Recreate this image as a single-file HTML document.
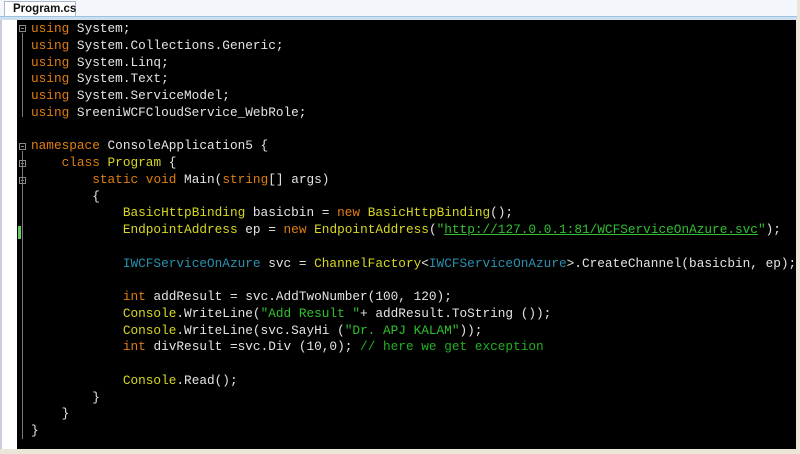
<!DOCTYPE html>
<html><head><style>
body{margin:0;width:800px;height:454px;background:#ece6d8;overflow:hidden;position:relative;font-family:"Liberation Sans",sans-serif}
#tabs{position:absolute;left:0;top:0;width:797px;height:16px;background:#f3f6fb}
#tab{position:absolute;left:4px;top:1px;width:72px;height:16px;background:#fff;border:1px solid #aab8cc;border-bottom:none;font-size:11.5px;font-weight:bold;line-height:15px;padding-left:8px;box-sizing:border-box;color:#111}
#bar{position:absolute;left:0;top:16px;width:797px;height:4px;background:#cde0f0;border-top:1px solid #9ec2e0;box-sizing:border-box}
#margin{position:absolute;left:0;top:20px;width:17px;height:429px;background:#fff;border-left:2px solid #ccd;box-sizing:border-box}
#ed{position:absolute;left:17px;top:20px;width:779px;height:429px;background:#000}
#code{position:absolute;left:31px;top:21px;font-family:"Liberation Mono",monospace;font-size:12.75px;line-height:16.75px;color:#e4e4e4;white-space:pre}
.k{color:#e07d10}.t{color:#d8d820}.s{color:#30c030}.u{color:#30c030;text-decoration:underline}.c{color:#20b020}.b{color:#2b91af}
.fold{position:absolute;left:19px;width:7px;height:7px;border:1px solid #888;box-sizing:border-box}
.fold:after{content:"";position:absolute;left:1px;top:2px;width:3px;height:1px;background:#888}
.vl{position:absolute;left:22px;width:1px;background:#777}
</style></head><body>
<div id="tabs"><div id="tab">Program.cs</div></div>
<div id="bar"></div>
<div id="margin"></div>
<div id="ed"></div>
<div class="vl" style="top:33px;height:84px"></div>
<div class="vl" style="top:151px;height:288px"></div>
<div class="fold" style="top:25px"></div>
<div class="fold" style="top:143px"></div>
<div class="fold" style="top:160px"></div>
<div class="fold" style="top:177px"></div>
<div style="position:absolute;left:18px;top:226px;width:3px;height:13px;background:#6c6"></div>
<div id="code"><span class="k">using</span> System;
<span class="k">using</span> System.Collections.Generic;
<span class="k">using</span> System.Linq;
<span class="k">using</span> System.Text;
<span class="k">using</span> System.ServiceModel;
<span class="k">using</span> SreeniWCFCloudService_WebRole;

<span class="k">namespace</span> ConsoleApplication5 {
    <span class="k">class</span> <span class="t">Program</span> {
        <span class="k">static</span> <span class="k">void</span> Main(<span class="k">string</span>[] args)
        {
            <span class="t">BasicHttpBinding</span> basicbin = <span class="k">new</span> <span class="t">BasicHttpBinding</span>();
            <span class="t">EndpointAddress</span> ep = <span class="k">new</span> <span class="t">EndpointAddress</span>(<span class="s">"</span><span class="u">http://127.0.0.1:81/WCFServiceOnAzure.svc</span><span class="s">"</span>);

            <span class="b">IWCFServiceOnAzure</span> svc = <span class="t">ChannelFactory</span>&lt;<span class="b">IWCFServiceOnAzure</span>&gt;.CreateChannel(basicbin, ep);

            <span class="k">int</span> addResult = svc.AddTwoNumber(100, 120);
            <span class="t">Console</span>.WriteLine(<span class="s">"Add Result "</span>+ addResult.ToString ());
            <span class="t">Console</span>.WriteLine(svc.SayHi (<span class="s">"Dr. APJ KALAM"</span>));
            <span class="k">int</span> divResult =svc.Div (10,0); <span class="c">// here we get exception</span>

            <span class="t">Console</span>.Read();
        }
    }
}</div>
</body></html>
